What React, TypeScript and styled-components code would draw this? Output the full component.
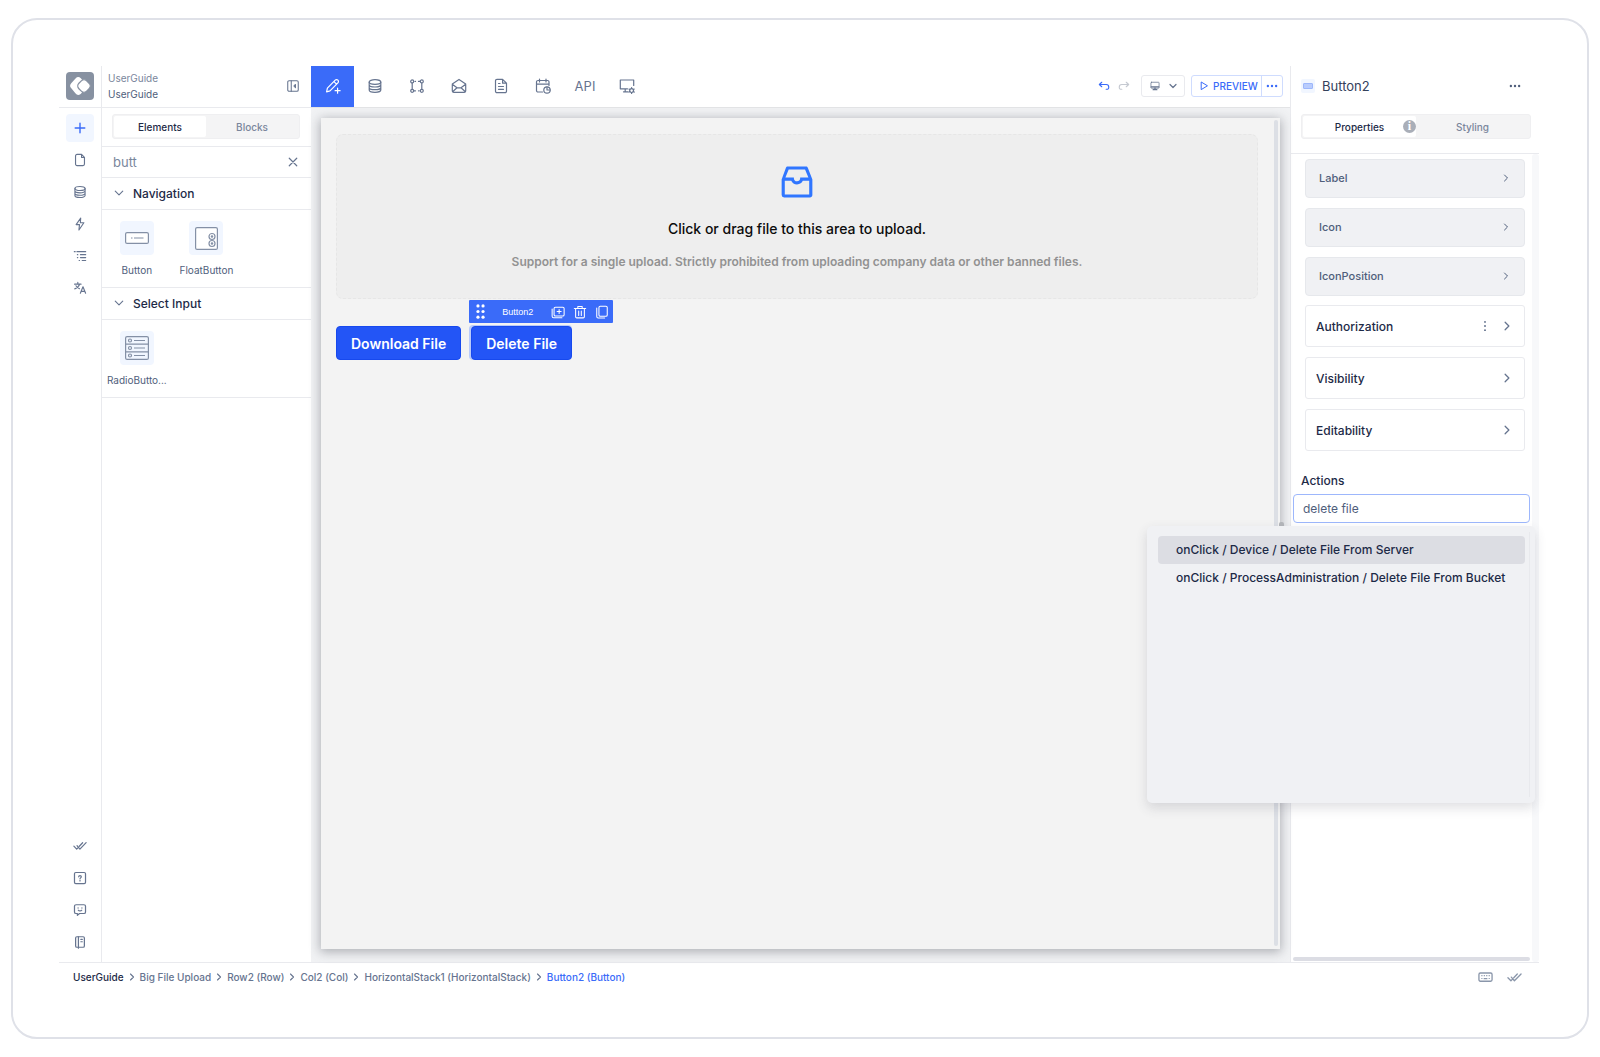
import React, { useState } from "react";
import styled, { createGlobalStyle } from "styled-components";
import { AiOutlineInbox } from "react-icons/ai";

const c = {
  text: "#1d2a47",
  mid: "#4f5e7b",
  soft: "#7a869c",
  icon: "#66748f",
  line: "#e9eaee",
  blue: "#3a6bf9",
  strong: "#2355f6",
  tint: "#f1f6ff",
  fill: "#f0f1f4",
};

const GlobalStyle = createGlobalStyle`
  * { box-sizing: border-box; }
  body { margin: 0; background: #fff; font-family: Inter, "Liberation Sans", sans-serif; color: ${c.text}; }
  button, input { font: inherit; color: inherit; }
  button { border: 0; padding: 0; background: none; cursor: pointer; }
  h2, h3, p, ul, ol { margin: 0; padding: 0; font-weight: inherit; font-size: inherit; }
  ul, ol { list-style: none; }
`;

const Frame = styled.div`
  display: flex;
  min-height: calc(100vh - 36px);
  margin: 18px 11px;
  padding: 46px 48px 46px 46px;
  border: 2px solid #dfe1e8;
  border-radius: 26px;
`;
const Shell = styled.div`
  flex: 1;
  display: flex;
  flex-direction: column;
  min-width: 0;
`;
const Main = styled.div`
  flex: 1;
  display: grid;
  grid-template-columns: 42px 210px minmax(0, 1fr) 249px;
  border-bottom: 1px solid ${c.line};
`;

/* Left rail */
const Rail = styled.nav`
  display: flex;
  flex-direction: column;
  align-items: center;
`;
const LogoCell = styled.div`
  align-self: stretch;
  height: 42px;
  display: flex;
  align-items: center;
  justify-content: center;
  border-bottom: 1px solid ${c.line};
  padding-bottom: 2px;
`;
const RailGroup = styled.div`
  display: flex;
  flex-direction: column;
  gap: 4px;
  padding: 6px 0;
  &:last-child { margin-top: auto; }
`;
const RailButton = styled.button<{ $active?: boolean }>`
  width: 28px;
  height: 28px;
  display: grid;
  place-items: center;
  border-radius: 4px;
  background: ${(p) => (p.$active ? c.tint : "none")};
  color: ${(p) => (p.$active ? c.blue : c.icon)};
`;

/* Elements panel */
const ElementsPanel = styled.aside`
  border-left: 1px solid ${c.line};
  min-width: 0;
`;
const PanelHeader = styled.header`
  height: 42px;
  display: flex;
  align-items: center;
  justify-content: space-between;
  padding: 0 11px 2px 6px;
  border-bottom: 1px solid ${c.line};
  color: ${c.icon};
`;
const Names = styled.div`
  font-size: 10px;
  line-height: 16px;
  color: ${c.soft};
`;
const Current = styled.div`
  color: ${c.mid};
`;
const Segment = styled.div`
  flex: 1;
  display: flex;
  height: 25px;
  padding: 1px;
  border: 1px solid #efeff1;
  border-radius: 3px;
  background: #f4f4f5;
`;
const SegmentTab = styled.button<{ $on: boolean }>`
  flex: 1;
  position: relative;
  font-size: 10px;
  font-weight: 500;
  line-height: 20px;
  border-radius: 2px;
  background: ${(p) => (p.$on ? "#fff" : "none")};
  color: ${(p) => (p.$on ? c.text : c.soft)};
`;
const SegmentRow = styled.div`
  display: flex;
  padding: 6px 11px 7px 10px;
  border-bottom: 1px solid ${c.line};
`;
const SearchRow = styled.div`
  display: flex;
  align-items: center;
  height: 31px;
  padding: 0 12px 0 11px;
  border-bottom: 1px solid ${c.line};
  color: ${c.icon};
`;
const SearchInput = styled.input`
  flex: 1;
  min-width: 0;
  border: 0;
  outline: 0;
  padding: 0;
  font-size: 13px;
  color: ${c.soft};
`;
const IconButton = styled.button`
  display: grid;
  place-items: center;
  color: inherit;
`;
const SectionHeader = styled.button`
  display: flex;
  align-items: center;
  gap: 9px;
  width: 100%;
  height: 32px;
  padding: 0 12px 1px;
  border-bottom: 1px solid ${c.line};
  font-size: 12px;
  font-weight: 500;
  svg { color: ${c.icon}; }
`;
const Tiles = styled.div`
  display: grid;
  grid-template-columns: repeat(3, 1fr);
  padding: 11px 0 10px;
  border-bottom: 1px solid ${c.line};
`;
const Tile = styled.button`
  display: flex;
  flex-direction: column;
  align-items: center;
  gap: 8px;
  font-size: 10px;
  line-height: 14px;
  color: ${c.mid};
`;
const TileIcon = styled.span`
  width: 34px;
  height: 34px;
  display: grid;
  place-items: center;
  border-radius: 4px;
  background: ${c.tint};
  color: #8490a6;
`;

/* Editor */
const Editor = styled.main`
  display: flex;
  flex-direction: column;
  min-width: 0;
`;
const Toolbar = styled.div`
  display: flex;
  justify-content: space-between;
  height: 42px;
  border-bottom: 1px solid #e3e4e6;
`;
const ToolTabs = styled.div`
  display: flex;
`;
const ToolTab = styled.button<{ $active?: boolean }>`
  width: ${(p) => (p.$active ? 43 : 42)}px;
  height: 41px;
  padding-bottom: 2px;
  display: grid;
  place-items: center;
  font-size: 13px;
  background: ${(p) => (p.$active ? c.blue : "none")};
  color: ${(p) => (p.$active ? "#fff" : c.icon)};
`;
const ToolbarEnd = styled.div`
  display: flex;
  align-items: center;
  padding: 0 7px 2px 0;
`;
const History = styled.div`
  display: flex;
  gap: 8px;
  margin-right: 11px;
`;
const HistoryButton = styled(IconButton)<{ $off?: boolean }>`
  color: ${(p) => (p.$off ? "#c5c9d1" : c.blue)};
`;
const DeviceButton = styled.button`
  display: flex;
  align-items: center;
  justify-content: center;
  gap: 9px;
  width: 44px;
  height: 22px;
  margin-right: 6px;
  border: 1px solid ${c.line};
  border-radius: 3px;
  color: ${c.icon};
`;
const PreviewGroup = styled.div`
  display: flex;
  height: 22px;
  border: 1px solid #cfdcfe;
  border-radius: 3px;
  color: ${c.blue};
`;
const PreviewButton = styled.button`
  display: flex;
  align-items: center;
  justify-content: center;
  gap: 4px;
  width: 69px;
  padding-left: 4px;
  font-size: 10px;
  font-weight: 500;
`;
const MoreButton = styled.button`
  width: 21px;
  display: grid;
  place-items: center;
  border-left: 1px solid #cfdcfe;
`;
const Workspace = styled.div`
  position: relative;
  flex: 1;
  display: flex;
  padding: 10px 10px 13px;
  background: #f1f2f4;
`;
const Page = styled.div`
  flex: 1;
  display: flex;
  background: #f3f3f3;
  box-shadow: 0 2px 10px 1px rgba(90, 95, 105, 0.45);
`;
const PageBody = styled.div`
  flex: 1;
  padding: 16px 16px 16px 15px;
`;
const ScrollThumb = styled.div`
  width: 4px;
  margin: 2px 2px 3px 0;
  border-radius: 2px;
  background: #dcdfe5;
`;
const SplitHandle = styled.span`
  position: absolute;
  right: 6px;
  top: calc(50% - 13px);
  width: 5px;
  height: 26px;
  border-radius: 2px;
  background: #b4b6ba;
`;
const UploadArea = styled.label`
  display: flex;
  flex-direction: column;
  align-items: center;
  height: 165px;
  padding-top: 26px;
  border: 1px dashed #e6e6e6;
  border-radius: 7px;
  background: #eee;
  svg { color: #3076ff; }
`;
const HiddenInput = styled.input`
  position: absolute;
  width: 1px;
  height: 1px;
  opacity: 0;
`;
const UploadTitle = styled.span`
  margin-top: 16px;
  font-size: 14px;
  font-weight: 500;
  line-height: 20px;
  color: #0c0c0c;
`;
const UploadHint = styled.span`
  margin-top: 14px;
  font-size: 12px;
  font-weight: 600;
  line-height: 18px;
  color: #929292;
`;
const ButtonRow = styled.div`
  display: flex;
  gap: 8px;
  margin-top: 27px;
`;
const Selected = styled.div`
  position: relative;
  margin-top: -1px;
  padding: 1px 0 0 2px;
  border-radius: 4px;
  background: #b9cbfb;
`;
const PrimaryButton = styled.button`
  height: 34px;
  padding: 0 14px;
  border: 1px solid #1749ee;
  border-radius: 4px;
  background: ${c.strong};
  color: #fff;
  font-size: 14px;
  font-weight: 600;
  white-space: nowrap;
`;
const SelectionBar = styled.div`
  position: absolute;
  left: 0;
  bottom: calc(100% + 2px);
  display: flex;
  align-items: center;
  width: 144px;
  height: 23px;
  padding: 0 4px;
  border-radius: 1px;
  background: ${c.blue};
  color: #fff;
  font-family: "Liberation Sans", Arial, sans-serif;
  font-size: 9px;
`;
const SelectionName = styled.span`
  flex: 1;
  padding-right: 4px;
  text-align: center;
`;
const SelectionTools = styled.div`
  display: flex;
  gap: 8px;
`;

/* Properties panel */
const Inspector = styled.aside`
  border-left: 1px solid ${c.line};
  display: flex;
  flex-direction: column;
  min-width: 0;
`;
const InspectorHeader = styled.header`
  display: flex;
  align-items: center;
  gap: 7px;
  height: 41px;
  padding: 0 18px 2px 10px;
  font-size: 13px;
  color: ${c.mid};
`;
const InspectorTitle = styled.h2`
  flex: 1;
  color: #34415c;
`;
const TypeIcon = styled.span`
  width: 14px;
  height: 14px;
  display: grid;
  place-items: center;
  background: ${c.tint};
  border-radius: 2px;
`;
const TypeGlyph = styled.span`
  width: 10px;
  height: 6px;
  border: 1px solid #9db7fb;
  border-radius: 1px;
  background: #b9ccfd;
`;
const InspectorTabs = styled.div`
  display: flex;
  padding: 7px 8px 14px 10px;
  border-bottom: 1px solid ${c.line};
`;
const InfoBadge = styled.span`
  position: absolute;
  right: 0;
  top: 4px;
  width: 13px;
  height: 13px;
  border-radius: 7px;
  background: #a9aeb8;
  color: #fff;
  font-family: "Liberation Serif", serif;
  font-weight: 700;
  font-size: 12px;
  line-height: 13px;
`;
const InspectorScroll = styled.div`
  flex: 1;
  display: flex;
`;
const InspectorBody = styled.div`
  flex: 1;
  min-width: 0;
  display: flex;
  flex-direction: column;
  padding: 5px 2px 1px;
`;
const Track = styled.div`
  width: 7px;
  background: #f7f8fa;
  border-radius: 3px;
`;
const PropertyList = styled.div`
  display: flex;
  flex-direction: column;
  gap: 10px;
  padding: 0 5px 0 12px;
  & + & { margin-top: 9px; }
`;
const PropertyRow = styled.button`
  display: flex;
  align-items: center;
  justify-content: space-between;
  height: 39px;
  padding: 0 14px 2px 13px;
  border: 1px solid #e6e8ec;
  border-radius: 4px;
  background: ${c.fill};
  font-size: 11px;
  font-weight: 500;
  color: ${c.mid};
`;
const RuleRow = styled.div`
  display: flex;
  align-items: center;
  height: 42px;
  padding: 0 12px 0 10px;
  border: 1px solid ${c.line};
  border-radius: 3px;
  font-size: 12px;
  font-weight: 500;
  gap: 11px;
  color: ${c.icon};
`;
const RuleName = styled.h3`
  flex: 1;
  color: ${c.text};
`;
const ActionsLabel = styled.label`
  display: block;
  margin: 22px 0 5px;
  padding-left: 8px;
  font-size: 12px;
  font-weight: 500;
  line-height: 16px;
`;
const Combo = styled.div`
  position: relative;
`;
const ActionInput = styled.input`
  display: block;
  width: 100%;
  height: 29px;
  padding: 0 9px 1px;
  border: 1px solid #9db7fc;
  border-radius: 4px;
  outline: 0;
  background: #fff;
  font-size: 12px;
  color: ${c.mid};
`;
const Menu = styled.ul`
  position: absolute;
  z-index: 2;
  top: calc(100% + 3px);
  right: -5px;
  width: 388px;
  height: 277px;
  padding: 10px 10px 10px 11px;
  border-radius: 5px;
  background: #f0f1f4;
  box-shadow: 0 5px 12px rgba(60, 65, 80, 0.16);
  &::after {
    content: "";
    position: absolute;
    top: 6px;
    bottom: 6px;
    right: 5px;
    width: 1px;
    background: #e8e9ed;
  }
`;
const MenuOption = styled.li<{ $active: boolean }>`
  height: 28px;
  padding: 0 0 0 18px;
  line-height: 28px;
  border-radius: 4px;
  background: ${(p) => (p.$active ? "#dcdde3" : "none")};
  font-size: 12px;
  font-weight: 500;
  white-space: nowrap;
`;
const BottomThumb = styled.div`
  height: 4px;
  margin-top: auto;
  border-radius: 2px;
  background: #dcdde4;
`;

/* Footer */
const Footer = styled.footer`
  display: flex;
  align-items: center;
  justify-content: space-between;
  height: 28px;
  padding: 0 17px 0 14px;
  color: ${c.icon};
`;
const Crumbs = styled.ol`
  display: flex;
  align-items: center;
`;
const Crumb = styled.li`
  display: flex;
  align-items: center;
`;
const CrumbLink = styled.a<{ $tone: string }>`
  font-size: 10px;
  font-weight: 500;
  text-decoration: none;
  color: ${(p) => p.$tone};
`;
const CrumbArrow = styled.span`
  display: grid;
  place-items: center;
  width: 16px;
`;
const FooterTools = styled.div`
  display: flex;
  gap: 14px;
  color: #8a96aa;
`;

const glyphs: Record<string, React.ReactNode> = {
  plus: <path d="M8 2.5v11M2.5 8h11" />,
  file: <path d="M9.8 1.6H4.6a1.7 1.7 0 0 0-1.7 1.7v9.4a1.7 1.7 0 0 0 1.7 1.7h6.8a1.7 1.7 0 0 0 1.7-1.7V5L9.8 1.6v3.6h3.2" />,
  db: (
    <>
      <ellipse cx="8" cy="4" rx="5.8" ry="2.3" />
      <path d="M2.2 4v8c0 1.3 2.6 2.3 5.8 2.3s5.8-1 5.8-2.3V4M2.2 6.7C2.2 8 4.8 9 8 9s5.8-1 5.8-2.3M2.2 9.4c0 1.3 2.6 2.3 5.8 2.3s5.8-1 5.8-2.3" />
    </>
  ),
  bolt: <path d="M8.800 1.200L3.600 8.700h3.800L6.800 14.800l5.600-8.200H8.400z" />,
  list: <path d="M1.500 3h1M4.500 3h10M5 6.500h.5M8.500 6.500h6M5 9.800h.5M8.500 9.800h6M7 13.100h.5M10.500 13.100h4" />,
  translate: <path d="M1.800 3.600h7.400M5.500 1.600v2M7.600 3.600C6.800 6.200 4.800 8 2 9M3.400 5.400c1 1.600 2.300 2.600 4 3.400M8.400 14l3-7.400 3 7.400M9.400 11.800h4" />,
  checks: <path d="M1 8.200l3.200 3.300 2-2M4.600 7.600l3.300 3.900L15 4.200M7.200 8.300l3.800-4" />,
  help: (
    <>
      <rect x="1.700" y="1.700" width="12.600" height="12.600" rx="1.500" />
      <path d="M6.500 6.700c0-2 3-2 3 0 0 1.100-1.500 1.200-1.500 2.200M8 10.800v.5" strokeWidth="1.400" />
    </>
  ),
  smile: (
    <>
      <path d="M3.500 2h9A1.800 1.800 0 0 1 14.300 3.800v6.400a1.800 1.800 0 0 1-1.800 1.800H7.500L5 14v-2H3.500a1.800 1.800 0 0 1-1.800-1.800V3.800A1.800 1.800 0 0 1 3.500 2z" />
      <path d="M5.800 5.500v.3M10.200 5.500v.3M6 8.300c.8 1.100 3.200 1.100 4 0" />
    </>
  ),
  book: (
    <>
      <rect x="3" y="2" width="10" height="12" rx="1.400" />
      <path d="M6.200 2v13M9 5h1.600M9 7.700h1.600" />
    </>
  ),
  collapse: (
    <>
      <rect x="2" y="2" width="12" height="12" rx="1.500" />
      <path d="M6 2v12M10.800 6.200L9 8l1.800 1.800z" />
    </>
  ),
  close: <path d="M3 3l10 10M13 3L3 13" />,
  down: <path d="M2 5l6 6 6-6" />,
  right: <path d="M5 2l6 6-6 6" />,
  pen: <path d="M1.600 13.800l.8-3.600 7.800-8a1.900 1.900 0 0 1 2.700 2.700l-7.900 8zM9 3.700l2.500 2.500M12.600 10.200v5M10.100 12.700h5" />,
  flow: (
    <>
      <circle cx="3.200" cy="3.400" r="1.500" />
      <circle cx="12.800" cy="3.400" r="1.500" />
      <circle cx="3.200" cy="12.800" r="1.500" />
      <circle cx="12.800" cy="12.800" r="1.500" />
      <path d="M6 3.400h.5M9.500 3.400h1.700M3.200 5v6.200M12.800 5v6.200M5 12.800h1.500M9.500 12.800h.7" />
    </>
  ),
  mail: <path d="M1.300 6L8 1.400 14.700 6v6.800a1.500 1.500 0 0 1-1.500 1.500H2.800a1.500 1.500 0 0 1-1.500-1.500zM1.300 6.300L6 9.800h4l4.700-3.500M1.600 13.800L6 9.800M14.400 13.800L10 9.800" />,
  doc: (
    <>
      <path d="M9.600 1.300H4A1.500 1.500 0 0 0 2.500 2.800v10.400A1.500 1.500 0 0 0 4 14.700h8a1.500 1.500 0 0 0 1.500-1.500V5.200zv3.900h3.900" />
      <path d="M5.500 5.500h1.500M5.500 8.500h5M5.500 11.300h5" />
    </>
  ),
  calendar: (
    <>
      <path d="M7.500 14H3a1.500 1.500 0 0 1-1.500-1.500V4A1.500 1.500 0 0 1 3 2.500h9.500A1.500 1.500 0 0 1 14 4v3.500M1.500 6.200H14M4.500 1v3M11 1v3" />
      <circle cx="12" cy="12" r="3.200" />
      <path d="M12 9v3h3" />
    </>
  ),
  monitorGear: (
    <>
      <path d="M8.500 10.800H1.300V2h13.400v5.500M6.200 11v2.600M4.500 13.800h4.500" />
      <circle cx="12.600" cy="12.600" r="1.900" />
      <path d="M12.600 9.600v1M12.600 14.600v1M10 11.100l.8.5M14.400 13.600l.8.5M10 14.100l.8-.5M14.400 11.600l.8-.5" />
    </>
  ),
  undo: <path d="M5 3L1.800 6 5 9M2 6h9a3.300 3.300 0 0 1 3.300 3.300v.7a2.400 2.400 0 0 1-2.400 2.400h-1" />,
  redo: <path d="M11 3l3.200 3L11 9M14 6H5a3.300 3.300 0 0 0-3.300 3.300v.7a2.400 2.400 0 0 0 2.400 2.400h1" />,
  monitor: (
    <>
      <rect x="1.500" y="2" width="13" height="9.500" rx="1" />
      <path d="M2 9.500h12M5 13.800h6M8 11.500v2" strokeWidth="2" />
    </>
  ),
  play: <path d="M3.500 2.200v11.600L13 8z" />,
  more: (
    <g fill="currentColor" stroke="none">
      <circle cx="2.500" cy="8" r="1.600" />
      <circle cx="8" cy="8" r="1.600" />
      <circle cx="13.500" cy="8" r="1.600" />
    </g>
  ),
  kebab: (
    <g fill="currentColor" stroke="none">
      <circle cx="8" cy="2.500" r="1.300" />
      <circle cx="8" cy="8" r="1.300" />
      <circle cx="8" cy="13.500" r="1.300" />
    </g>
  ),
  grip: (
    <g fill="currentColor" stroke="none">
      {[2, 8, 14].map((y) => (
        <React.Fragment key={y}>
          <circle cx="5.300" cy={y} r="1.700" />
          <circle cx="10.700" cy={y} r="1.700" />
        </React.Fragment>
      ))}
    </g>
  ),
  addCopy: (
    <>
      <rect x="3.500" y="2.500" width="11.500" height="10" rx="1.500" />
      <path d="M1.300 4.500v8.300A1.700 1.700 0 0 0 3 14.500h9.500M9.300 5.200v4.600M7 7.500h4.600" />
    </>
  ),
  trash: <path d="M1.500 4h13M5.500 4V1.600h5V4M3 4v9.400a1.300 1.300 0 0 0 1.300 1.300h7.400a1.300 1.300 0 0 0 1.300-1.300V4M6.500 7v5M9.500 7v5" />,
  copy: (
    <>
      <rect x="4.500" y="1.400" width="9.500" height="11.400" rx="1.500" />
      <path d="M2 3.500v9.700A1.700 1.700 0 0 0 3.700 14.900h7.300" />
    </>
  ),
  keyboard: (
    <>
      <rect x="1" y="3.200" width="14" height="8.800" rx="1.500" strokeWidth="1.400" />
      <path d="M4 6h.3M6.600 6h.3M9.200 6h.3M11.800 6h.3M4 9h.3M6.500 9.200h3M11.800 9h.3" />
    </>
  ),
};

function Icon({ name, size = 14, weight = 1.2 }: { name: string; size?: number; weight?: number }) {
  return (
    <svg width={size} height={size} viewBox="0 0 16 16" fill="none" stroke="currentColor" strokeWidth={weight} strokeLinecap="round" strokeLinejoin="round" aria-hidden="true">
      {glyphs[name]}
    </svg>
  );
}

function Logo() {
  return (
    <svg width="28" height="28" viewBox="0 0 28 28" role="img" aria-label="Home">
      <rect width="28" height="28" rx="4" fill="#8791a1" />
      <path d="M12.300 9L8 13.700l4.300 5.300" fill="none" stroke="#fff" strokeWidth="7.500" strokeLinecap="round" strokeLinejoin="round" />
      <rect x="12.500" y="8.500" width="11" height="11" rx="3.800" transform="rotate(45 18 14)" fill="#fff" stroke="#8791a1" strokeWidth="1.300" />
    </svg>
  );
}

function ButtonGlyph() {
  return (
    <svg width="24" height="12" viewBox="0 0 24 12" fill="#fff" stroke="currentColor" strokeWidth="1.200" aria-hidden="true">
      <rect x=".6" y=".6" width="22.800" height="10.800" rx="1.500" />
      <path d="M6 6h1.500M9 6h9.500" />
    </svg>
  );
}

function FloatGlyph() {
  return (
    <svg width="23" height="23" viewBox="0 0 23 23" fill="#fff" stroke="currentColor" strokeWidth="1.200" aria-hidden="true">
      <rect x=".6" y=".6" width="21.800" height="21.800" rx="1.500" />
      <circle cx="17" cy="9.500" r="3" />
      <circle cx="17" cy="16.500" r="3" />
      <circle cx="17" cy="9.500" r=".7" />
      <circle cx="17" cy="16.500" r=".7" />
    </svg>
  );
}

function RadioGlyph() {
  return (
    <svg width="24" height="24" viewBox="0 0 24 24" fill="none" stroke="currentColor" strokeWidth="1.200" aria-hidden="true">
      <rect x=".6" y=".6" width="22.800" height="22.800" rx="1.500" />
      <path d="M.6 8.200h22.800M.6 15.800h22.800M9 4.500h11M9 12h11M9 19.500h11" />
      <circle cx="5" cy="4.500" r="1.500" />
      <circle cx="5" cy="12" r="1.500" />
      <circle cx="5" cy="19.500" r="1.500" />
    </svg>
  );
}

const railTop = [["plus", "Add"], ["file", "Pages"], ["db", "Data"], ["bolt", "Actions"], ["list", "Outline"], ["translate", "Translations"]];
const railBottom = [["checks", "Checks"], ["help", "Help"], ["smile", "Feedback"], ["book", "Docs"]];
const tools = [["pen", "Design"], ["db", "Database"], ["flow", "Process"], ["mail", "Mail"], ["doc", "Documents"], ["calendar", "Schedule"], ["api", "API"], ["monitorGear", "Settings"]];
const crumbs = ["UserGuide", "Big File Upload", "Row2 (Row)", "Col2 (Col)", "HorizontalStack1 (HorizontalStack)", "Button2 (Button)"];
const options = ["onClick / Device / Delete File From Server", "onClick / ProcessAdministration / Delete File From Bucket"];

export default function App() {
  const [tab, setTab] = useState("Elements");
  const [side, setSide] = useState("Properties");
  const [query, setQuery] = useState("butt");
  const [action, setAction] = useState("delete file");
  const [active, setActive] = useState(0);

  return (
    <>
      <GlobalStyle />
      <Frame>
        <Shell>
          <Main>
            <Rail>
              <LogoCell><Logo /></LogoCell>
              <RailGroup>
                {railTop.map(([name, label], i) => (
                  <RailButton key={name} aria-label={label} $active={i === 0}>
                    <Icon name={name} weight={i === 0 ? 1.6 : 1.3} />
                  </RailButton>
                ))}
              </RailGroup>
              <RailGroup>
                {railBottom.map(([name, label]) => (
                  <RailButton key={name} aria-label={label}><Icon name={name} weight={1.4} /></RailButton>
                ))}
              </RailGroup>
            </Rail>

            <ElementsPanel>
              <PanelHeader>
                <Names>
                  UserGuide
                  <Current>UserGuide</Current>
                </Names>
                <IconButton aria-label="Collapse panel"><Icon name="collapse" /></IconButton>
              </PanelHeader>
              <SegmentRow>
                <Segment role="tablist">
                  {["Elements", "Blocks"].map((t) => (
                    <SegmentTab key={t} role="tab" aria-selected={tab === t} $on={tab === t} onClick={() => setTab(t)}>{t}</SegmentTab>
                  ))}
                </Segment>
              </SegmentRow>
              <SearchRow>
                <SearchInput aria-label="Search elements" value={query} onChange={(e) => setQuery(e.target.value)} />
                <IconButton aria-label="Clear search" onClick={() => setQuery("")}><Icon name="close" size={12} weight={1.6} /></IconButton>
              </SearchRow>
              <SectionHeader><Icon name="down" size={10} weight={1.8} />Navigation</SectionHeader>
              <Tiles>
                <Tile><TileIcon><ButtonGlyph /></TileIcon>Button</Tile>
                <Tile><TileIcon><FloatGlyph /></TileIcon>FloatButton</Tile>
              </Tiles>
              <SectionHeader><Icon name="down" size={10} weight={1.8} />Select Input</SectionHeader>
              <Tiles>
                <Tile><TileIcon><RadioGlyph /></TileIcon>RadioButto...</Tile>
              </Tiles>
            </ElementsPanel>

            <Editor>
              <Toolbar>
                <ToolTabs>
                  {tools.map(([name, label], i) => (
                    <ToolTab key={name} aria-label={label} $active={i === 0}>
                      {name === "api" ? "API" : <Icon name={name} size={16} />}
                    </ToolTab>
                  ))}
                </ToolTabs>
                <ToolbarEnd>
                  <History>
                    <HistoryButton aria-label="Undo"><Icon name="undo" size={12} weight={1.5} /></HistoryButton>
                    <HistoryButton aria-label="Redo" $off><Icon name="redo" size={12} weight={1.5} /></HistoryButton>
                  </History>
                  <DeviceButton aria-label="Device"><Icon name="monitor" size={10} /><Icon name="down" size={8} weight={2.4} /></DeviceButton>
                  <PreviewGroup>
                    <PreviewButton><Icon name="play" size={10} weight={1.6} />PREVIEW</PreviewButton>
                    <MoreButton aria-label="More preview options"><Icon name="more" size={12} /></MoreButton>
                  </PreviewGroup>
                </ToolbarEnd>
              </Toolbar>
              <Workspace>
                <Page>
                  <PageBody>
                    <UploadArea>
                      <HiddenInput type="file" />
                      <AiOutlineInbox size={42} />
                      <UploadTitle>Click or drag file to this area to upload.</UploadTitle>
                      <UploadHint>Support for a single upload. Strictly prohibited from uploading company data or other banned files.</UploadHint>
                    </UploadArea>
                    <ButtonRow>
                      <PrimaryButton>Download File</PrimaryButton>
                      <Selected>
                        <SelectionBar>
                          <Icon name="grip" size={15} />
                          <SelectionName>Button2</SelectionName>
                          <SelectionTools>
                            <IconButton aria-label="Duplicate"><Icon name="addCopy" /></IconButton>
                            <IconButton aria-label="Delete"><Icon name="trash" /></IconButton>
                            <IconButton aria-label="Copy"><Icon name="copy" /></IconButton>
                          </SelectionTools>
                        </SelectionBar>
                        <PrimaryButton>Delete File</PrimaryButton>
                      </Selected>
                    </ButtonRow>
                  </PageBody>
                  <ScrollThumb />
                </Page>
                <SplitHandle />
              </Workspace>
            </Editor>

            <Inspector>
              <InspectorHeader>
                <TypeIcon><TypeGlyph /></TypeIcon>
                <InspectorTitle>Button2</InspectorTitle>
                <IconButton aria-label="More"><Icon name="more" size={12} /></IconButton>
              </InspectorHeader>
              <InspectorTabs>
                <Segment role="tablist">
                  <SegmentTab role="tab" aria-selected={side === "Properties"} $on={side === "Properties"} onClick={() => setSide("Properties")}>
                    Properties<InfoBadge aria-hidden="true">i</InfoBadge>
                  </SegmentTab>
                  <SegmentTab role="tab" aria-selected={side === "Styling"} $on={side === "Styling"} onClick={() => setSide("Styling")}>Styling</SegmentTab>
                </Segment>
              </InspectorTabs>
              <InspectorScroll>
                <InspectorBody>
                  <PropertyList>
                    {["Label", "Icon", "IconPosition"].map((p) => (
                      <PropertyRow key={p}>{p}<Icon name="right" size={8} weight={2} /></PropertyRow>
                    ))}
                  </PropertyList>
                  <PropertyList>
                    {["Authorization", "Visibility", "Editability"].map((p) => (
                      <RuleRow key={p}>
                        <RuleName>{p}</RuleName>
                        {p === "Authorization" && <IconButton aria-label="Authorization options"><Icon name="kebab" size={12} /></IconButton>}
                        <IconButton aria-label={`Open ${p}`}><Icon name="right" size={10} weight={2} /></IconButton>
                      </RuleRow>
                    ))}
                  </PropertyList>
                  <ActionsLabel htmlFor="actions">Actions</ActionsLabel>
                  <Combo>
                    <ActionInput id="actions" value={action} onChange={(e) => setAction(e.target.value)} />
                    <Menu role="listbox" aria-label="Actions">
                      {options.map((o, i) => (
                        <MenuOption key={o} role="option" aria-selected={i === active} $active={i === active} onMouseEnter={() => setActive(i)}>{o}</MenuOption>
                      ))}
                    </Menu>
                  </Combo>
                  <BottomThumb />
                </InspectorBody>
                <Track />
              </InspectorScroll>
            </Inspector>
          </Main>

          <Footer>
            <Crumbs>
              {crumbs.map((label, i) => (
                <Crumb key={label}>
                  {i > 0 && <CrumbArrow><Icon name="right" size={8} weight={2.2} /></CrumbArrow>}
                  <CrumbLink href="#" $tone={i === 0 ? c.text : i === crumbs.length - 1 ? c.blue : c.icon}>{label}</CrumbLink>
                </Crumb>
              ))}
            </Crumbs>
            <FooterTools>
              <IconButton aria-label="Shortcuts"><Icon name="keyboard" size={15} /></IconButton>
              <IconButton aria-label="Status"><Icon name="checks" size={15} weight={1.4} /></IconButton>
            </FooterTools>
          </Footer>
        </Shell>
      </Frame>
    </>
  );
}
